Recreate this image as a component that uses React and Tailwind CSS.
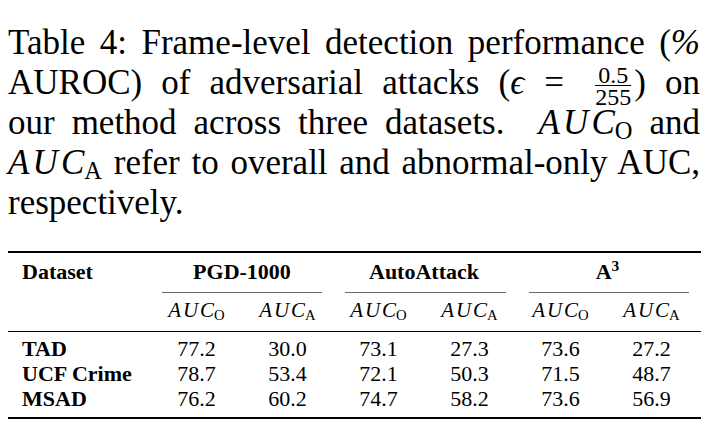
import React from 'react';

const serif = "[font-family:'Liberation_Serif','Times_New_Roman',serif]";

// math-style AUC with an upright subscript
function Auc({ sub }) {
  return (
    <span className="whitespace-nowrap">
      <span className="italic tracking-[0.09em]">AU</span>
      <span className="italic">C</span>
      <span className="text-[0.7em] relative top-[0.22em]">{sub}</span>
    </span>
  );
}

function Fraction() {
  return (
    <span className="inline-flex flex-col items-center align-[11px] text-[24px] px-[3px]">
      <span className="leading-[16px]">0.5</span>
      <span className="h-px bg-black self-stretch mt-[2px]" />
      <span className="leading-[16px] mt-[3px]">255</span>
    </span>
  );
}

const lineCls = 'h-[40px] leading-[40px] whitespace-nowrap text-justify [text-align-last:justify]';

const rows = [
  ['TAD', '77.2', '30.0', '73.1', '27.3', '73.6', '27.2'],
  ['UCF Crime', '78.7', '53.4', '72.1', '50.3', '71.5', '48.7'],
  ['MSAD', '76.2', '60.2', '74.7', '58.2', '73.6', '56.9'],
];

const grid = 'grid grid-cols-[143px_repeat(6,91px)]';

export default function App() {
  return (
    <div className={`w-[718px] h-[438px] bg-white text-black overflow-hidden ${serif}`}>
      {/* caption */}
      <div className="ml-[8px] w-[692px] pt-[23px] text-[35px]">
        <div className={lineCls}>
          Table 4: Frame-level detection performance (<span className="italic">%</span>
        </div>
        <div className={lineCls}>
          AUROC) of adversarial attacks (<span className="italic">ϵ</span>
          <span className="inline-block w-[26px] text-center ml-[20px] mr-[22px]">=</span>
          <Fraction />) on
        </div>
        <div className={lineCls}>
          our method across three datasets.&nbsp; <Auc sub="O" /> and
        </div>
        <div className={lineCls}>
          <Auc sub="A" /> refer to overall and abnormal-only AUC,
        </div>
        <div className="h-[40px] leading-[40px]">respectively.</div>
      </div>

      {/* table */}
      <div className="ml-[8px] w-[693px] mt-[28px] text-[22px] leading-[25px]">
        <div className="h-[2px] bg-black" />
        <div className={`${grid} mt-[6px] font-bold`}>
          <div className="pl-[14px]">Dataset</div>
          <div className="col-span-2 text-center">PGD-1000</div>
          <div className="col-span-2 text-center">AutoAttack</div>
          <div className="col-span-2 text-center pl-[3px]">
            A<span className="text-[0.7em] relative -top-[0.5em]">3</span>
          </div>
        </div>
        <div className={`${grid} mt-[6px]`}>
          <div />
          <div className="col-span-2 h-px bg-[#6b6b6b] ml-[11px] mr-[11px]" />
          <div className="col-span-2 h-px bg-[#6b6b6b] ml-[12px] mr-[9px]" />
          <div className="col-span-2 h-px bg-[#6b6b6b] ml-[14px] mr-[8px]" />
        </div>
        <div className={`${grid} mt-[5px] text-[21px]`}>
          <div />
          {['O', 'A', 'O', 'A', 'O', 'A'].map((s, i) => (
            <div key={i} className="text-center">
              <Auc sub={s} />
            </div>
          ))}
        </div>
        <div className="h-px bg-black mt-[6px]" />
        <div className="mt-[4px]">
          {rows.map((r) => (
            <div key={r[0]} className={grid}>
              <div className="pl-[14px] font-bold">{r[0]}</div>
              {r.slice(1).map((v, i) => (
                <div key={i} className="text-center">{v}</div>
              ))}
            </div>
          ))}
        </div>
        <div className="h-[2px] bg-black mt-[6px]" />
      </div>
    </div>
  );
}
